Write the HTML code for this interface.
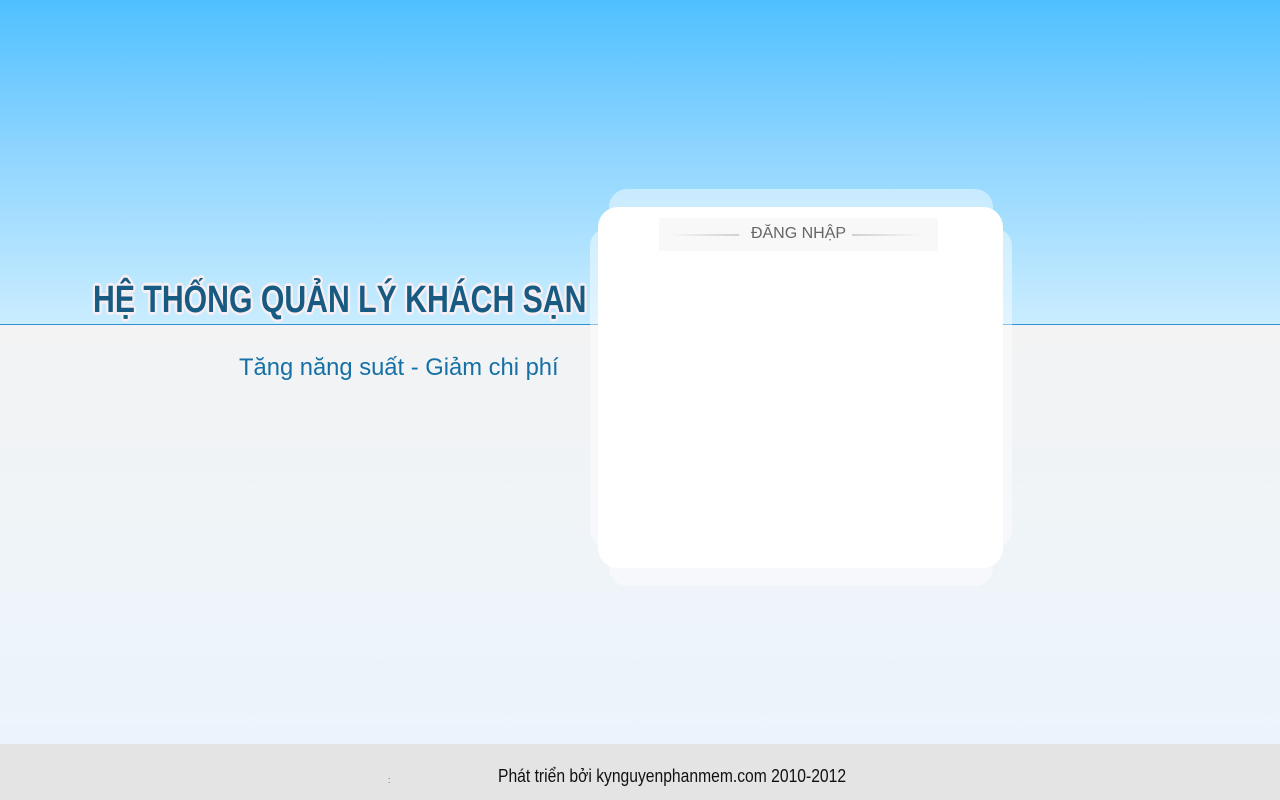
<!DOCTYPE html>
<html><head><meta charset="utf-8"><style>
html,body{margin:0;padding:0;width:1280px;height:800px;overflow:hidden;font-family:"Liberation Sans",sans-serif;}
.top{position:absolute;left:0;top:0;width:1280px;height:324px;background:linear-gradient(#4fc0ff 0%,#8dd4ff 45%,#caedff 100%);}
.line{position:absolute;left:0;top:324px;width:1280px;height:1px;background:#2f8fd0;}
.mid{position:absolute;left:0;top:325px;width:1280px;height:419px;background:linear-gradient(#f3f3f3,#ebf4fc);}
.foot{position:absolute;left:0;top:744px;width:1280px;height:56px;background:#e4e4e4;}
.title{position:absolute;left:93px;top:279px;font-size:38px;font-weight:bold;color:#175b82;white-space:nowrap;letter-spacing:0px;
 text-shadow:3px 0 0 #f5eef2,-3px 0 0 #f5eef2,0 3px 0 #f5eef2,0 -3px 0 #f5eef2,2px 2px 0 #f5eef2,-2px -2px 0 #f5eef2,2px -2px 0 #f5eef2,-2px 2px 0 #f5eef2,0 0 4px #f5eef2;transform-origin:0 0;transform:scaleX(0.795);}
.sub{position:absolute;left:239px;top:354px;font-size:24px;color:#1570a6;white-space:nowrap;transform-origin:0 0;transform:scaleX(0.99);}
.l1{position:absolute;left:609px;top:189px;width:384px;height:397px;border-radius:18px;background:rgba(255,255,255,0.45);}
.l2{position:absolute;left:590px;top:228px;width:422px;height:320px;border-radius:18px;background:rgba(255,255,255,0.45);}
.l3{position:absolute;left:598px;top:207px;width:405px;height:361px;border-radius:20px;background:#fff;}
.hd{position:absolute;left:659px;top:218px;width:279px;height:33px;background:#f8f8f8;}
.hd span{position:absolute;left:0;width:279px;top:7px;text-align:center;font-size:16px;color:#666;}
.hl{position:absolute;top:16px;height:2px;width:70px;}
.ft{position:absolute;left:498px;top:766px;font-size:18px;color:#111;white-space:nowrap;transform-origin:0 0;transform:scaleX(0.87);}
</style></head><body>
<div class="top"></div><div class="line"></div><div class="mid"></div><div class="foot"></div>
<div class="l1"></div><div class="l2"></div><div class="l3"></div>
<div class="hd"><div class="hl" style="left:10px;background:linear-gradient(90deg,rgba(210,210,210,0),#d0d0d0)"></div><span>ĐĂNG NHẬP</span><div class="hl" style="left:193px;background:linear-gradient(90deg,#d0d0d0,rgba(210,210,210,0))"></div></div>
<div class="title">HỆ THỐNG QUẢN LÝ KHÁCH SẠN</div>
<div class="sub">Tăng năng suất - Giảm chi phí</div>
<div style="position:absolute;left:388px;top:775px;font-size:9px;color:#886600">:</div>
<div class="ft">Phát triển bởi kynguyenphanmem.com 2010-2012</div>
</body></html>
